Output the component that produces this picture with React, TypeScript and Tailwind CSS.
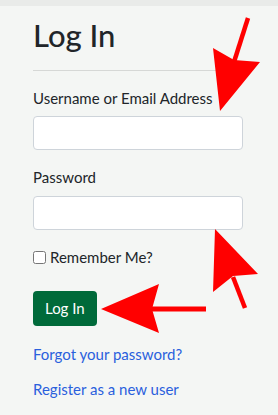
import React from 'react';

const Arrows: React.FC = () => (
  <svg className="absolute inset-0 pointer-events-none" width="278" height="415" viewBox="0 0 278 415">
    {/* top arrow, pointing down-left */}
    <line x1="248" y1="18" x2="234" y2="62" stroke="#ff0000" strokeWidth="4.5" />
    <polygon points="213,48 234,60 260,62 220,111" fill="#ff0000" />
    {/* middle arrow, pointing up-left */}
    <line x1="233" y1="277" x2="245" y2="308" stroke="#ff0000" strokeWidth="4.5" />
    <polygon points="215,229 258,274 233,276 213,292" fill="#ff0000" />
    {/* bottom arrow, pointing left */}
    <line x1="152" y1="309" x2="206" y2="309" stroke="#ff0000" strokeWidth="5" />
    <polygon points="101,309 159,284 152,309 159,333" fill="#ff0000" />
  </svg>
);

export default function App() {
  return (
    <div
      className="relative w-[278px] h-[415px] overflow-hidden bg-[#f4f6f4] text-[#212529]"
      style={{ fontFamily: 'Lato, sans-serif' }}
    >
      <div className="h-[6px] bg-[#e9ebe9]" />
      <div className="w-[210px] ml-[33px] flex flex-col">
        <h1 className="text-[31px] leading-[38px] font-medium mt-[10px]">Log In</h1>
        <hr className="mt-[16px] border-t border-[#d6d8d6]" />
        <label className="mt-[16px] text-[15px] leading-[22px]">Username or Email Address</label>
        <input className="mt-[7px] h-[34px] bg-white border border-[#ced4da] rounded-[4px]" />
        <label className="mt-[16px] text-[15px] leading-[22px]">Password</label>
        <input type="password" className="mt-[8px] h-[34px] bg-white border border-[#ced4da] rounded-[4px]" />
        <div className="mt-[16px] flex items-center gap-[4px] text-[15px] leading-[22px]">
          <input type="checkbox" className="w-[13px] h-[13px] m-0" />
          <span>Remember Me?</span>
        </div>
        <div className="mt-[23px]">
          <button className="h-[35px] px-[12px] bg-[#006a3a] text-white text-[15px] rounded-[4px]">Log In</button>
        </div>
        <a className="mt-[17px] text-[15px] leading-[22px] text-[#2a60dd]">Forgot your password?</a>
        <a className="mt-[13px] text-[15px] leading-[22px] text-[#2a60dd]">Register as a new user</a>
      </div>
      <Arrows />
    </div>
  );
}
